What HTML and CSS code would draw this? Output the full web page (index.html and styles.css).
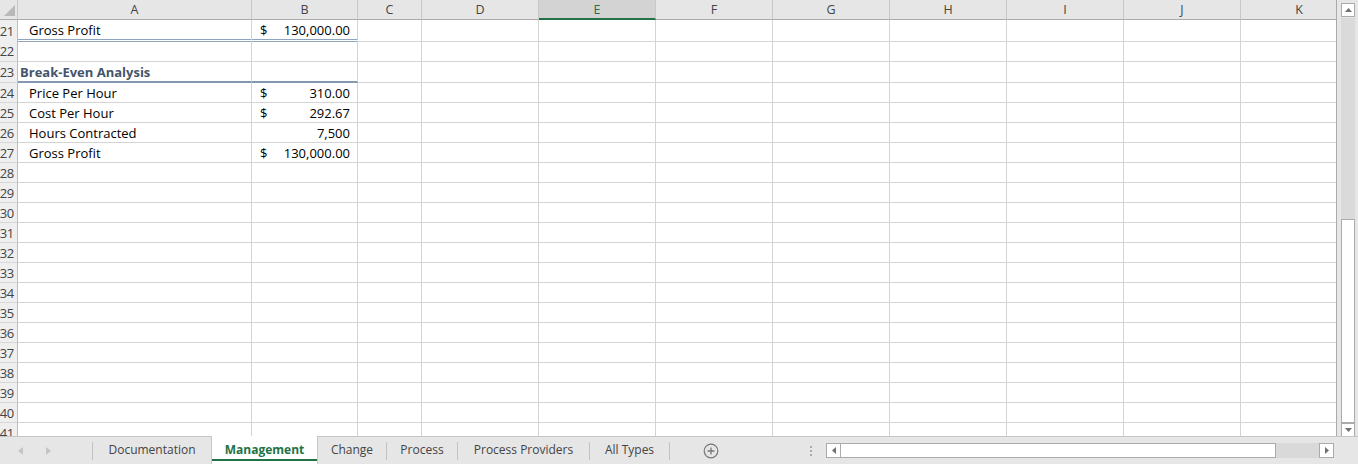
FILE: index.html
```html
<!DOCTYPE html>
<html>
<head>
<meta charset="utf-8">
<link rel="stylesheet" href="styles.css">
</head>
<body>
<div class="app">
  <div class="main">
    <div class="sheet">
      <div class="row head">
        <div class="corner"><svg width="18" height="19" viewBox="0 0 18 19"><polygon points="15,5 15,16 4,16" fill="#b9b9b9"/></svg></div>
        <div class="ch">A</div><div class="ch">B</div><div class="ch">C</div><div class="ch">D</div><div class="ch sel">E</div><div class="ch">F</div><div class="ch">G</div><div class="ch">H</div><div class="ch">I</div><div class="ch">J</div><div class="ch">K</div>
      </div>
      <div class="row tall">
        <div class="rh">21</div><div class="c ind dbl">Gross Profit</div><div class="c money dbl"><span>$</span><span>130,000.00</span></div><div class="c"></div><div class="c"></div><div class="c"></div><div class="c"></div><div class="c"></div><div class="c"></div><div class="c"></div><div class="c"></div><div class="c"></div>
      </div>
      <div class="row tall">
        <div class="rh">22</div><div class="c"></div><div class="c"></div><div class="c"></div><div class="c"></div><div class="c"></div><div class="c"></div><div class="c"></div><div class="c"></div><div class="c"></div><div class="c"></div><div class="c"></div>
      </div>
      <div class="row tall">
        <div class="rh">23</div><div class="c title thick">Break-Even Analysis</div><div class="c thick"></div><div class="c"></div><div class="c"></div><div class="c"></div><div class="c"></div><div class="c"></div><div class="c"></div><div class="c"></div><div class="c"></div><div class="c"></div>
      </div>
      <div class="row">
        <div class="rh">24</div><div class="c ind">Price Per Hour</div><div class="c money"><span>$</span><span>310.00</span></div><div class="c"></div><div class="c"></div><div class="c"></div><div class="c"></div><div class="c"></div><div class="c"></div><div class="c"></div><div class="c"></div><div class="c"></div>
      </div>
      <div class="row">
        <div class="rh">25</div><div class="c ind">Cost Per Hour</div><div class="c money"><span>$</span><span>292.67</span></div><div class="c"></div><div class="c"></div><div class="c"></div><div class="c"></div><div class="c"></div><div class="c"></div><div class="c"></div><div class="c"></div><div class="c"></div>
      </div>
      <div class="row">
        <div class="rh">26</div><div class="c ind">Hours Contracted</div><div class="c num">7,500</div><div class="c"></div><div class="c"></div><div class="c"></div><div class="c"></div><div class="c"></div><div class="c"></div><div class="c"></div><div class="c"></div><div class="c"></div>
      </div>
      <div class="row">
        <div class="rh">27</div><div class="c ind">Gross Profit</div><div class="c money"><span>$</span><span>130,000.00</span></div><div class="c"></div><div class="c"></div><div class="c"></div><div class="c"></div><div class="c"></div><div class="c"></div><div class="c"></div><div class="c"></div><div class="c"></div>
      </div>
      <div class="row"><div class="rh">28</div><div class="c"></div><div class="c"></div><div class="c"></div><div class="c"></div><div class="c"></div><div class="c"></div><div class="c"></div><div class="c"></div><div class="c"></div><div class="c"></div><div class="c"></div></div>
      <div class="row"><div class="rh">29</div><div class="c"></div><div class="c"></div><div class="c"></div><div class="c"></div><div class="c"></div><div class="c"></div><div class="c"></div><div class="c"></div><div class="c"></div><div class="c"></div><div class="c"></div></div>
      <div class="row"><div class="rh">30</div><div class="c"></div><div class="c"></div><div class="c"></div><div class="c"></div><div class="c"></div><div class="c"></div><div class="c"></div><div class="c"></div><div class="c"></div><div class="c"></div><div class="c"></div></div>
      <div class="row"><div class="rh">31</div><div class="c"></div><div class="c"></div><div class="c"></div><div class="c"></div><div class="c"></div><div class="c"></div><div class="c"></div><div class="c"></div><div class="c"></div><div class="c"></div><div class="c"></div></div>
      <div class="row"><div class="rh">32</div><div class="c"></div><div class="c"></div><div class="c"></div><div class="c"></div><div class="c"></div><div class="c"></div><div class="c"></div><div class="c"></div><div class="c"></div><div class="c"></div><div class="c"></div></div>
      <div class="row"><div class="rh">33</div><div class="c"></div><div class="c"></div><div class="c"></div><div class="c"></div><div class="c"></div><div class="c"></div><div class="c"></div><div class="c"></div><div class="c"></div><div class="c"></div><div class="c"></div></div>
      <div class="row"><div class="rh">34</div><div class="c"></div><div class="c"></div><div class="c"></div><div class="c"></div><div class="c"></div><div class="c"></div><div class="c"></div><div class="c"></div><div class="c"></div><div class="c"></div><div class="c"></div></div>
      <div class="row"><div class="rh">35</div><div class="c"></div><div class="c"></div><div class="c"></div><div class="c"></div><div class="c"></div><div class="c"></div><div class="c"></div><div class="c"></div><div class="c"></div><div class="c"></div><div class="c"></div></div>
      <div class="row"><div class="rh">36</div><div class="c"></div><div class="c"></div><div class="c"></div><div class="c"></div><div class="c"></div><div class="c"></div><div class="c"></div><div class="c"></div><div class="c"></div><div class="c"></div><div class="c"></div></div>
      <div class="row"><div class="rh">37</div><div class="c"></div><div class="c"></div><div class="c"></div><div class="c"></div><div class="c"></div><div class="c"></div><div class="c"></div><div class="c"></div><div class="c"></div><div class="c"></div><div class="c"></div></div>
      <div class="row"><div class="rh">38</div><div class="c"></div><div class="c"></div><div class="c"></div><div class="c"></div><div class="c"></div><div class="c"></div><div class="c"></div><div class="c"></div><div class="c"></div><div class="c"></div><div class="c"></div></div>
      <div class="row"><div class="rh">39</div><div class="c"></div><div class="c"></div><div class="c"></div><div class="c"></div><div class="c"></div><div class="c"></div><div class="c"></div><div class="c"></div><div class="c"></div><div class="c"></div><div class="c"></div></div>
      <div class="row"><div class="rh">40</div><div class="c"></div><div class="c"></div><div class="c"></div><div class="c"></div><div class="c"></div><div class="c"></div><div class="c"></div><div class="c"></div><div class="c"></div><div class="c"></div><div class="c"></div></div>
      <div class="row"><div class="rh">41</div><div class="c"></div><div class="c"></div><div class="c"></div><div class="c"></div><div class="c"></div><div class="c"></div><div class="c"></div><div class="c"></div><div class="c"></div><div class="c"></div><div class="c"></div></div>
    </div>
    <div class="vscroll">
      <div class="vbtn up"><svg width="7" height="4" viewBox="0 0 7 4"><polygon points="0,4 7,4 3.5,0" fill="#707070"/></svg></div>
      <div class="vtrack"><div class="vthumb"></div></div>
      <div class="vbtn down"><svg width="7" height="4" viewBox="0 0 7 4"><polygon points="0,0 7,0 3.5,4" fill="#707070"/></svg></div>
    </div>
  </div>
  <div class="tabbar">
    <div class="nav">
      <svg width="5" height="8" viewBox="0 0 5 8"><polygon points="5,0 5,8 0,4" fill="#c4c4c4"/></svg>
      <svg width="5" height="8" viewBox="0 0 5 8"><polygon points="0,0 0,8 5,4" fill="#c4c4c4"/></svg>
    </div>
    <span class="sep"></span>
    <div class="tab t-doc">Documentation</div>
    <div class="tab active">Management</div>
    <div class="tab t-change">Change</div>
    <span class="sep"></span>
    <div class="tab t-process">Process</div>
    <span class="sep"></span>
    <div class="tab t-pp">Process Providers</div>
    <span class="sep"></span>
    <div class="tab t-all">All Types</div>
    <span class="sep"></span>
    <div class="add"><svg width="16" height="16" viewBox="0 0 16 16"><circle cx="8" cy="8" r="6.8" fill="none" stroke="#777" stroke-width="1.2"/><path d="M8 4.5v7M4.5 8h7" stroke="#777" stroke-width="1.3"/></svg></div>
    <div class="dots"><span></span><span></span><span></span></div>
    <div class="hscroll">
      <div class="hbtn"><svg width="4" height="7" viewBox="0 0 4 7"><polygon points="4,0 4,7 0,3.5" fill="#707070"/></svg></div>
      <div class="hthumb"></div>
      <div class="htrack"></div>
      <div class="hbtn right"><svg width="4" height="7" viewBox="0 0 4 7"><polygon points="0,0 0,7 4,3.5" fill="#707070"/></svg></div>
    </div>
  </div>
</div>
</body>
</html>
```

FILE: styles.css
```css
* { box-sizing: border-box; }
html, body { margin: 0; padding: 0; background: #fff; }
body { font-family: "Open Sans", "Noto Sans", sans-serif; }

.app {
  width: 1358px;
  height: 464px;
  overflow: hidden;
  display: flex;
  flex-direction: column;
}

.main {
  display: flex;
  height: 436px;
}

.sheet {
  width: 1336px;
  height: 436px;
  overflow: hidden;
  flex-shrink: 0;
}

.row {
  display: grid;
  grid-template-columns: 18px 234px 106px 64px 117px 117px 117px 117px 117px 117px 117px 117px;
  width: 1359px;
  height: 20px;
}
.row.tall { height: 21px; }

.corner {
  background: #e6e6e6;
  border-right: 1px solid #c8c8c8;
  border-bottom: 1px solid #ababab;
  line-height: 0;
}

.ch {
  background: #e6e6e6;
  border-right: 1px solid #c8c8c8;
  border-bottom: 1px solid #ababab;
  display: flex;
  align-items: center;
  justify-content: center;
  font-size: 12.5px;
  color: #444;
}
.ch.sel {
  background: #d3d3d3;
  border-bottom: 2px solid #217346;
  color: #217346;
}

.rh {
  background: #efefef;
  border-right: 1px solid #bdbdbd;
  border-bottom: 1px solid #d8d8d8;
  display: flex;
  align-items: center;
  justify-content: flex-end;
  padding-right: 3px;
  overflow: hidden;
  font-size: 13px;
  color: #444;
  letter-spacing: -0.3px;
}

.c {
  border-right: 1px solid #d4d4d4;
  border-bottom: 1px solid #d4d4d4;
  display: flex;
  align-items: center;
  font-size: 13px;
  color: #000;
  white-space: nowrap;
  padding: 0 7px 0 8px;
}
.c.ind { padding-left: 11px; }
.c.title {
  padding-left: 2px;
  font-weight: 700;
  color: #44546a;
}
.c.money { justify-content: space-between; }
.c.num { justify-content: flex-end; }
.c.dbl { border-bottom: 3px double #8ea4bf; padding-top: 1px; }
.c.thick { border-bottom: 2px solid #8497b0; }

.vscroll {
  width: 22px;
  height: 436px;
  background: #e6e6e6;
  border-left: 1px solid #ababab;
  display: flex;
  flex-direction: column;
  padding: 3px 3px 0 4px;
  flex-shrink: 0;
}
.vbtn {
  width: 14px;
  height: 14px;
  background: #fff;
  border: 1px solid #ababab;
  display: flex;
  align-items: center;
  justify-content: center;
}
.vtrack {
  flex: 1;
  background: #dadada;
  margin-top: 1px;
  display: flex;
  flex-direction: column;
  justify-content: flex-end;
}
.vthumb {
  height: 204px;
  background: #fff;
  border: 1px solid #ababab;
}
.vbtn.down { height: 13px; border-bottom: none; }

.tabbar {
  height: 28px;
  background: #e6e6e6;
  border-top: 1px solid #c6c6c6;
  display: flex;
  align-items: center;
}

.nav {
  width: 92px;
  display: flex;
  align-items: center;
  gap: 23px;
  padding-left: 18px;
}

.sep {
  width: 1px;
  height: 18px;
  background: #c2c2c2;
}

.tab {
  height: 100%;
  display: flex;
  align-items: center;
  justify-content: center;
  font-size: 12px;
  color: #444;
  white-space: nowrap;
  padding-bottom: 3px;
}
.t-doc { width: 118px; }
.t-change { width: 68px; }
.t-process { width: 70px; }
.t-pp { width: 131px; }
.t-all { width: 79px; }

.tab.active {
  width: 107px;
  height: 28px;
  margin-top: -1px;
  padding-bottom: 1px;
  align-self: flex-start;
  background: #fff;
  border-left: 1px solid #c6c6c6;
  border-right: 1px solid #c6c6c6;
  color: #217346;
  font-weight: 700;
  position: relative;
}
.tab.active::after {
  content: "";
  position: absolute;
  left: 0;
  right: 0;
  bottom: 3px;
  height: 2px;
  background: #217346;
}

.add {
  margin-left: 33px;
  width: 16px;
  height: 16px;
  line-height: 0;
}

.dots {
  margin-left: 91px;
  display: flex;
  flex-direction: column;
  gap: 2px;
}
.dots span {
  width: 2px;
  height: 2px;
  background: #aaa;
}

.hscroll {
  margin-left: 14px;
  width: 508px;
  height: 15px;
  display: flex;
}
.hbtn {
  width: 15px;
  height: 15px;
  background: #fff;
  border: 1px solid #ababab;
  display: flex;
  align-items: center;
  justify-content: center;
}
.hthumb {
  width: 435px;
  height: 15px;
  background: #fff;
  border: 1px solid #ababab;
  border-left: none;
}
.htrack {
  flex: 1;
  background: #d9d9d9;
}
```
